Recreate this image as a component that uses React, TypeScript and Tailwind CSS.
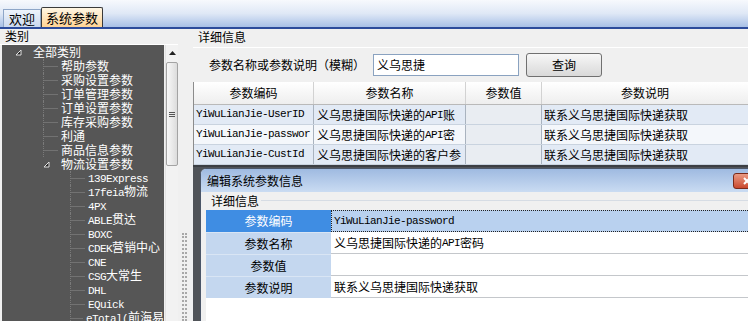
import React from "react"

const cjk = "font-['Noto_Sans_CJK_SC','Liberation_Sans',sans-serif]"
const mono = "font-['Liberation_Mono','Noto_Sans_CJK_SC',monospace]"

// ascii runs in a narrow mono face, the rest in the CJK face
function Mixed({ text }: { text: string }) {
  const parts = text.match(/[\x00-\x7f]+|[^\x00-\x7f]+/g) ?? []
  return (
    <>
      {parts.map((p, i) =>
        /^[\x00-\x7f]/.test(p) ? (
          <span key={i} className={`${mono} text-[11px] tracking-[-0.6px]`}>
            {p}
          </span>
        ) : (
          <span key={i}>{p}</span>
        )
      )}
    </>
  )
}

const tree: { t: string; l: number; open?: boolean }[] = [
  { t: "全部类别", l: 0, open: true },
  { t: "帮助参数", l: 1 },
  { t: "采购设置参数", l: 1 },
  { t: "订单管理参数", l: 1 },
  { t: "订单设置参数", l: 1 },
  { t: "库存采购参数", l: 1 },
  { t: "利通", l: 1 },
  { t: "商品信息参数", l: 1 },
  { t: "物流设置参数", l: 1, open: true },
  { t: "139Express", l: 2 },
  { t: "17feia物流", l: 2 },
  { t: "4PX", l: 2 },
  { t: "ABLE贯达", l: 2 },
  { t: "BOXC", l: 2 },
  { t: "CDEK营销中心", l: 2 },
  { t: "CNE", l: 2 },
  { t: "CSG大常生", l: 2 },
  { t: "DHL", l: 2 },
  { t: "EQuick", l: 2 },
  { t: "eTotal(前海易", l: 2 },
]

const rows = [
  { code: "YiWuLianJie-UserID", name: "义乌思捷国际快递的API账", desc: "联系义乌思捷国际快递获取", bg: "bg-[#e2eaf5]" },
  { code: "YiWuLianJie-passwor", name: "义乌思捷国际快递的API密", desc: "联系义乌思捷国际快递获取", bg: "bg-[#f4f7fb]" },
  { code: "YiWuLianJie-CustId", name: "义乌思捷国际快递的客户参", desc: "联系义乌思捷国际快递获取", bg: "bg-[#e2eaf5]" },
]

function Expander() {
  return (
    <svg width="7" height="7" viewBox="0 0 7 7" className="shrink-0">
      <path d="M6 1 L6 6 L1 6 Z" fill="#262626" stroke="#e0e0e0" strokeWidth="1" />
    </svg>
  )
}

function TreeRow({ t, l, open }: { t: string; l: number; open?: boolean }) {
  if (l === 0) {
    return (
      <div className="h-[14px] flex items-center">
        <div className="w-[13px]" />
        <Expander />
        <div className="w-[11px]" />
        <span className="leading-[14px]">{t}</span>
      </div>
    )
  }
  const pad = l === 1 ? "pl-[41px]" : "pl-[68px]"
  return (
    <div className={`h-[14px] flex items-center ${pad}`}>
      {open ? (
        <div className="w-[15px] h-full flex items-center">
          <Expander />
        </div>
      ) : (
        <div className="w-[15px] h-full flex items-center border-l border-dotted border-[#7a7a7a]">
          <div className="w-full border-t border-[#727272]" />
        </div>
      )}
      <div className="w-[3px]" />
      <span className="leading-[14px] whitespace-nowrap">
        <Mixed text={t} />
      </span>
    </div>
  )
}

export default function App() {
  return (
    <div className={`w-[748px] h-[321px] overflow-hidden bg-[#f0f0f0] flex flex-col text-[12px] text-black ${cjk}`}>
      {/* tab strip */}
      <div className="h-[29px] shrink-0 flex items-end pl-[3px] bg-gradient-to-b from-[#f7f9fd] via-[#dfe8f6] to-[#a8c0e6] border-b-2 border-[#2c4b9b]">
        <div className="h-[18px] w-[38px] flex items-center justify-center text-[13px] leading-[16px] bg-gradient-to-b from-[#eef3fb] to-[#cbd9ee] border border-b-0 border-[#8ea6c8]">
          欢迎
        </div>
        <div className="h-[20px] w-[62px] flex items-center justify-center text-[13px] leading-[16px] bg-gradient-to-b from-[#fff6e4] to-[#ffd394] border border-b-0 border-[#3a3a3a] rounded-t-[2px]">
          系统参数
        </div>
      </div>

      <div className="flex-1 flex min-h-0">
        {/* left: categories */}
        <div className="w-[178px] shrink-0 flex flex-col">
          <div className="h-[16px] pl-[5px] leading-[14px] border-b border-white">类别</div>
          <div className="flex-1 flex pl-[2px] min-h-0">
            <div className="w-[162px] bg-[#565656] text-white overflow-hidden">
              {tree.map((n) => (
                <TreeRow key={n.t} {...n} />
              ))}
            </div>
            <div className="w-[1px]" />
            {/* scrollbar */}
            <div className="w-[13px] flex flex-col bg-[#f2f2f2] border-l border-[#e3e3e3]">
              <div className="h-[16px] flex items-center justify-center">
                <svg width="7" height="4" viewBox="0 0 7 4">
                  <path d="M0 4 L3.5 0 L7 4 Z" fill="#222" />
                </svg>
              </div>
              <div className="h-[104px] mt-[1px] rounded-[2px] border border-[#a3a3a3] bg-gradient-to-r from-[#f8f8f8] to-[#dcdcdc] flex items-center justify-center">
                <div className="flex flex-col gap-[1px]">
                  <div className="w-[6px] border-t border-[#555]" />
                  <div className="w-[6px] border-t border-[#555]" />
                  <div className="w-[6px] border-t border-[#555]" />
                </div>
              </div>
            </div>
          </div>
        </div>

        {/* splitter */}
        <div className="w-[14px] shrink-0 flex justify-center">
          <div className="mt-[204px] ml-[-2px] w-[5px] border-x-2 border-dotted border-[#a8a8a8]" />
        </div>

        {/* right: details */}
        <div className="flex-1 flex flex-col min-w-0">
          <div className="h-[18px] pl-[6px] leading-[14px] pt-[1px]">详细信息</div>
          <div className="h-[35px] flex items-center pl-[16px] border-t border-white ml-[1px]">
            <span className="leading-[14px] whitespace-nowrap">参数名称或参数说明（模糊）</span>
            <div className="ml-[8px] w-[146px] h-[22px] bg-white border border-[#8aa2c0] flex items-center pl-[3px]">
              义乌思捷
            </div>
            <div className="ml-[7px] w-[76px] h-[24px] rounded-[3px] border border-[#707070] bg-gradient-to-b from-[#f7f7f7] to-[#d9d9d9] flex items-center justify-center">
              查询
            </div>
          </div>

          {/* grid */}
          <div className="ml-[1px] border-l border-[#8c8c8c] overflow-hidden">
            <div className="grid grid-cols-[120px_152px_76px_207px] h-[23px] bg-gradient-to-b from-white to-[#eeeeee] border-b border-[#b9b9b9]">
              {["参数编码", "参数名称", "参数值", "参数说明"].map((h) => (
                <div key={h} className="flex items-center justify-center border-r border-[#d2d2d2] leading-[14px]">
                  {h}
                </div>
              ))}
            </div>
            {rows.map((r) => (
              <div key={r.code} className={`grid grid-cols-[120px_152px_76px_207px] h-[20px] border-b border-[#c9d3df] ${r.bg}`}>
                <div className={`${mono} text-[11px] tracking-[-0.6px] flex items-center pl-[2px] border-r border-[#a9b3bf] whitespace-nowrap overflow-hidden`}>
                  {r.code}
                </div>
                <div className="flex items-center pl-[3px] border-r border-[#a9b3bf] whitespace-nowrap overflow-hidden leading-[14px]">
                  <Mixed text={r.name} />
                </div>
                <div className="border-r border-[#a9b3bf] bg-[#e9edf2]" />
                <div className="flex items-center pl-[2px] whitespace-nowrap leading-[14px]">{r.desc}</div>
              </div>
            ))}
          </div>

          {/* empty grid area with the edit window over it */}
          <div className="flex-1 relative bg-[#505358] border-t-2 border-[#3c3f44] ml-[1px]">
            <div className="absolute left-[7px] top-[1px] w-[581px] h-[200px] border border-[#4b5668] rounded-tl-[6px] bg-[#f0f0f0] flex flex-col overflow-hidden">
              <div className="h-[23px] shrink-0 flex items-center justify-between pl-[6px] bg-gradient-to-b from-[#9fbae1] to-[#cadcf2]">
                <span className="leading-[14px]">编辑系统参数信息</span>
                <div className="mr-[4px] w-[43px] h-[16px] rounded-[3px] border border-[#7a2a1a] bg-gradient-to-b from-[#e99a84] to-[#c9472c] flex items-center pl-[9px]">
                  <svg width="8" height="8" viewBox="0 0 8 8">
                    <path d="M1 1 L7 7 M7 1 L1 7" stroke="#fff" strokeWidth="2" />
                  </svg>
                </div>
              </div>
              <div className="h-[17px] shrink-0 flex items-center pl-[10px]">
                <span className="leading-[14px]">详细信息</span>
                <div className="flex-1 ml-[2px] border-t border-[#d6dce4]" />
              </div>
              <div className="flex-1 ml-[5px] mt-[1px] bg-white flex flex-col">
                <div className="flex h-[22px]">
                  <div className="w-[125px] shrink-0 bg-[#3f8de3] text-white flex items-center justify-center leading-[14px]">
                    参数编码
                  </div>
                  <div className={`flex-1 bg-[#b9d1ef] border border-dotted border-[#222] flex items-center pl-[2px] ${mono} text-[11px] tracking-[-0.6px]`}>
                    YiWuLianJie-password
                  </div>
                </div>
                {[
                  { k: "参数名称", v: "义乌思捷国际快递的API密码" },
                  { k: "参数值", v: "" },
                  { k: "参数说明", v: "联系义乌思捷国际快递获取" },
                ].map((r) => (
                  <div key={r.k} className="flex h-[22px]">
                    <div className="w-[125px] shrink-0 bg-[#c4d7ef] border-t border-[#d9e5f4] flex items-center justify-center leading-[14px]">
                      {r.k}
                    </div>
                    <div className="flex-1 border-b border-[#c4c7cb] flex items-center pl-[3px] leading-[14px] whitespace-nowrap">
                      <Mixed text={r.v} />
                    </div>
                  </div>
                ))}
              </div>
            </div>
          </div>
        </div>
      </div>
    </div>
  )
}
